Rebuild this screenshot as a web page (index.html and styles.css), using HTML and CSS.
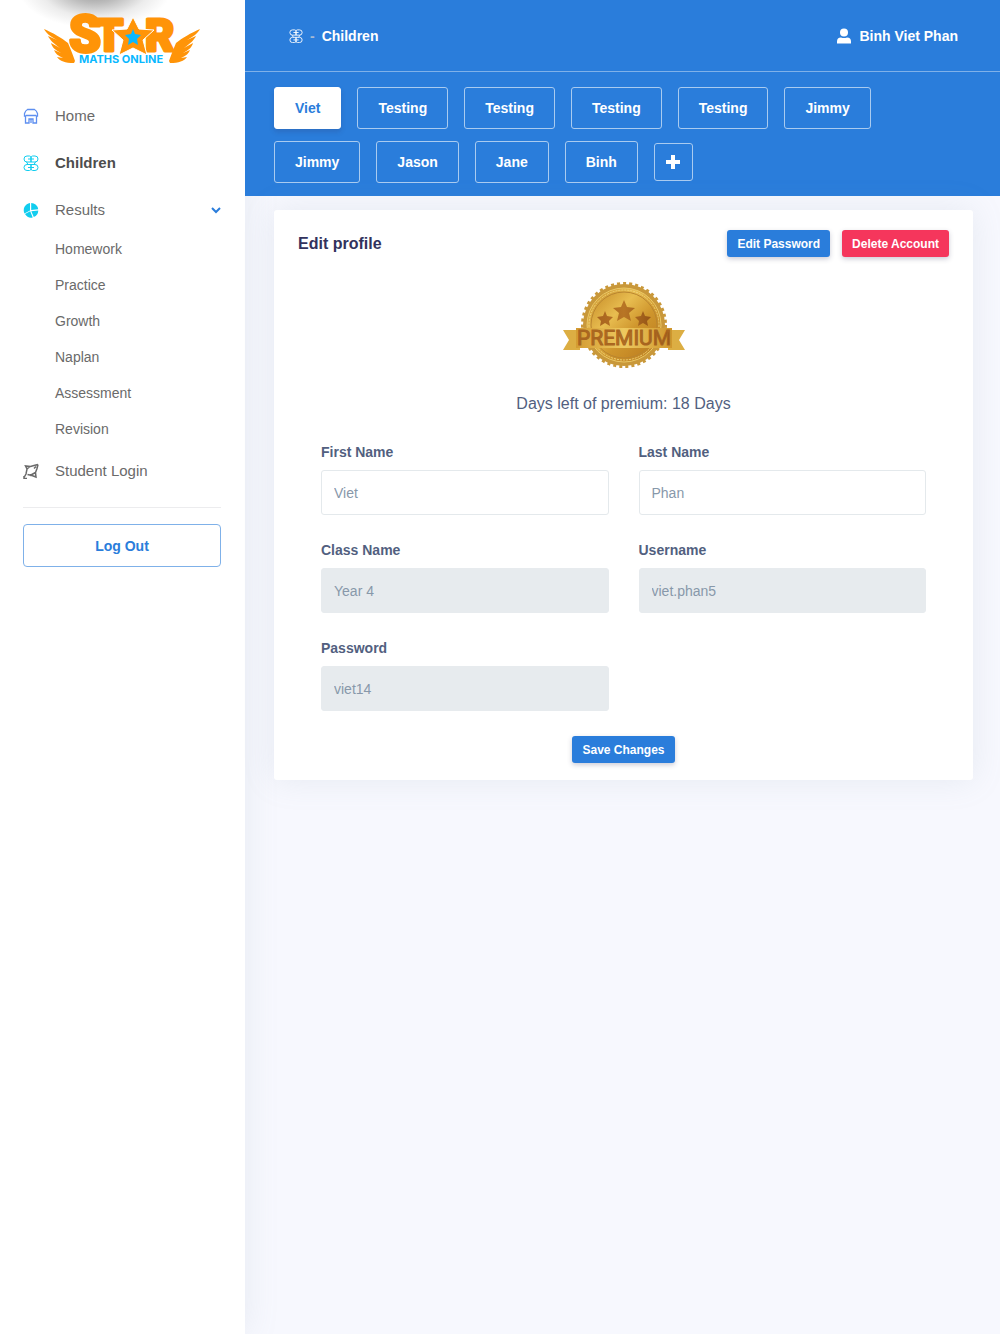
FILE: index.html
```html
<!DOCTYPE html>
<html lang="en">
<head>
<meta charset="utf-8">
<meta name="viewport" content="width=device-width, initial-scale=1">
<title>Children - Star Maths Online</title>
<link rel="stylesheet" href="styles.css">
</head>
<body>
<svg class="defs" aria-hidden="true">
  <symbol id="butterfly" viewBox="0 0 16 16">
    <path d="M4 1h2.500Q8 1 8 3v4H4Q1 7 1 4t3-3zM12 1H9.500Q8 1 8 3v4h4q3 0 3-3t-3-3zM4 9.500h4v4q0 2-1.500 2H4q-3 0-3-3t3-3zM12 9.500H8v4q0 2 1.500 2H12q3 0 3-3t-3-3zM5 4h6M5 12.500h6M3.500 7l1.500 2.500M12.500 7L11 9.500" fill="none" stroke="currentColor" stroke-width="1"/>
  </symbol>
</svg>
<div class="app">
  <aside class="sidebar">
    <a class="logo" href="#" aria-label="Star Maths Online">
      <svg viewBox="0 0 158 56" width="158" height="56">
        <g fill="#ff9408">
          <path d="M1 18C10 22 19 27 25 32c3 7 5 12 7 18l-1 2C22 52 17 50 14 46l6 1c-5-2-8-5-9-8l7 3c-6-3-9-6-10-10l9 5C10 32 7 29 5 25l9 4C8 26 3 22 1 18z"/>
          <path d="M157 18c-9 4-18 9-24 14-3 7-5 12-7 18l1 2c9 0 14-2 17-6l-6 1c5-2 8-5 9-8l-7 3c6-3 9-6 10-10l-9 5c7-5 10-8 12-12l-9 4c6-3 11-7 13-11z"/>
          <g class="logo-word" stroke="#ff9408" stroke-width="3" stroke-linejoin="round">
            <text x="26" y="41" font-size="51">S</text>
            <text x="52" y="40" font-size="45">T</text>
            <text x="102" y="40" font-size="45">R</text>
          </g>
          <path d="M90 6l6 12 15 1-11 10 4 15-14-7-14 7 4-15-11-10 15-1z" stroke="#fff" stroke-width="1"/>
        </g>
        <path d="M90 18l2 5 6 1-4 4 1 6-5-3-5 3 1-6-4-4 6-1z" fill="#09b8ff"/>
        <text class="logo-tag" x="36" y="52" font-size="11">MATHS ONLINE</text>
      </svg>
    </a>
    <nav>
      <ul class="nav">
        <li><a class="nav-link" href="#">
          <svg class="icon home" viewBox="0 0 16 16"><path d="M4.500 1.500h7q2 1 3 4v2.500h-1v7h-3.500v-4H6v4H2.500V8h-1V5.500q1-3 3-4zM3 7.500h10M8 11v4" fill="none" stroke="currentColor" stroke-width="1.300"/></svg>
          Home</a></li>
        <li><a class="nav-link active" href="#"><svg class="icon cyan"><use href="#butterfly"/></svg>Children</a></li>
        <li>
          <a class="nav-link" href="#">
            <svg class="icon cyan" viewBox="0 0 16 16"><path d="M7 1v7.500l-5.500 3A7.300 7.300 0 0 1 7 1zM8.200 1a7.200 7.200 0 0 1 7 6.300l-7 .8zM8.300 9.200l7-.7a7.300 7.300 0 0 1-4.500 6.500zM7.200 9.200l2.500 6.300A7.300 7.300 0 0 1 2 12z" fill="currentColor"/></svg>
            Results
            <svg class="chevron" viewBox="0 0 10 8"><path d="M1 2l4 4 4-4" fill="none" stroke="currentColor" stroke-width="2"/></svg>
          </a>
          <ul class="subnav">
            <li><a href="#">Homework</a></li>
            <li><a href="#">Practice</a></li>
            <li><a href="#">Growth</a></li>
            <li><a href="#">Naplan</a></li>
            <li><a href="#">Assessment</a></li>
            <li><a href="#">Revision</a></li>
          </ul>
        </li>
        <li><a class="nav-link" href="#">
          <svg class="icon" viewBox="0 0 16 16"><path d="M15 1.500L11 2.500 7.500 3.500 2.500 3l1.500 3-1 5-2 3.500M15 1.500l-1 4-1.500 4 .500 4.500-4-1.500-4.500-1M4 6l3-2.500M7 12.500l5.500-3M11 5.500l2-2M1 13v2.500h3" fill="none" stroke="currentColor" stroke-width="1.500"/></svg>
          Student Login</a></li>
      </ul>
    </nav>
    <hr>
    <button class="logout" type="button">Log Out</button>
  </aside>

  <main>
    <header>
      <div class="topbar">
        <div class="crumbs"><svg class="crumb-icon"><use href="#butterfly"/></svg><span class="dash">-</span><span>Children</span></div>
        <a class="user" href="#"><svg viewBox="0 0 14 16" width="14" height="16"><circle cx="7" cy="4.500" r="4" fill="currentColor"/><path d="M0 15.500v-2q0-4 4-4 3 1.200 6 0 4 0 4 4v2z" fill="currentColor"/></svg>Binh Viet Phan</a>
      </div>
      <div class="tabs">
        <button class="tab selected" type="button">Viet</button>
        <button class="tab" type="button">Testing</button>
        <button class="tab" type="button">Testing</button>
        <button class="tab" type="button">Testing</button>
        <button class="tab" type="button">Testing</button>
        <button class="tab" type="button">Jimmy</button>
        <button class="tab" type="button">Jimmy</button>
        <button class="tab" type="button">Jason</button>
        <button class="tab" type="button">Jane</button>
        <button class="tab" type="button">Binh</button>
        <button class="tab add" type="button" aria-label="Add child"><svg viewBox="0 0 14 14" width="14" height="14"><path d="M7 0v14M0 7h14" stroke="currentColor" stroke-width="4"/></svg></button>
      </div>
    </header>

    <section class="card">
      <div class="card-head">
        <h1>Edit profile</h1>
        <div class="actions">
          <button class="btn" type="button">Edit Password</button>
          <button class="btn danger" type="button">Delete Account</button>
        </div>
      </div>
      <div class="premium">
        <svg viewBox="0 0 122 88" width="122" height="88">
          <defs>
            <linearGradient id="gold" x1="0" y1="0" x2="1" y2="1"><stop offset="0" stop-color="#c58a26"/><stop offset=".35" stop-color="#e8bd50"/><stop offset=".6" stop-color="#cf962d"/><stop offset="1" stop-color="#b9791d"/></linearGradient>
            <linearGradient id="ribbon"><stop offset="0" stop-color="#d39b32"/><stop offset=".5" stop-color="#eec95f"/><stop offset="1" stop-color="#cf962d"/></linearGradient>
            <linearGradient id="bronze"><stop offset="0" stop-color="#a8641f"/><stop offset=".5" stop-color="#b87525"/><stop offset="1" stop-color="#955417"/></linearGradient>
          </defs>
          <circle cx="61" cy="44" r="41" fill="#c9983a"/>
          <circle cx="61" cy="44" r="41" fill="none" stroke="#c9983a" stroke-width="4" stroke-dasharray="3 3"/>
          <circle cx="61" cy="44" r="37" fill="url(#gold)" stroke="#eac866" stroke-width="1"/>
          <circle cx="61" cy="44" r="33" fill="url(#gold)" stroke="#b98530" stroke-width="1"/>
          <circle cx="61" cy="44" r="35" fill="none" stroke="#f0d47a" stroke-width="1" stroke-dasharray="2 1"/>
          <path d="M0 49h17v20H0l6-10zM122 49h-17v20h17l-6-10z" fill="#dcae43"/>
          <path d="M13 47h96v20H13z" fill="url(#ribbon)"/>
          <path d="M61 19l3 7 8 1-6 5 2 8-7-4-7 4 2-8-6-5 8-1zM42 30l2 5 6 1-4 4 1 5-5-3-5 3 1-5-4-4 6-1zM80 30l2 5 6 1-4 4 1 5-5-3-5 3 1-5-4-4 6-1z" fill="url(#bronze)"/>
          <text x="61" y="64" text-anchor="middle" font-size="21" fill="url(#bronze)" stroke="#a8651f" stroke-width="1">PREMIUM</text>
        </svg>
        <p>Days left of premium: 18 Days</p>
      </div>
      <form>
        <div class="fields">
          <div class="field"><label for="first">First Name</label><input id="first" type="text" value="Viet"></div>
          <div class="field"><label for="last">Last Name</label><input id="last" type="text" value="Phan"></div>
          <div class="field"><label for="class">Class Name</label><input id="class" type="text" value="Year 4" disabled></div>
          <div class="field"><label for="username">Username</label><input id="username" type="text" value="viet.phan5" disabled></div>
          <div class="field"><label for="password">Password</label><input id="password" type="text" value="viet14" disabled></div>
        </div>
        <button class="btn save" type="button">Save Changes</button>
      </form>
    </section>
  </main>
</div>
</body>
</html>
```
FILE: styles.css
```css
* { box-sizing: border-box; }
body {
  margin: 0;
  background: #f7f8fe;
  color: #525f7f;
  font: 14px/20px "Liberation Sans", Arial, sans-serif;
}
button, input { font: inherit; }
button { cursor: pointer; }
a { color: inherit; text-decoration: none; }
ul { list-style: none; margin: 0; padding: 0; }
.defs { position: absolute; width: 0; height: 0; }

.app { display: flex; min-height: 100vh; }

/* Sidebar */
.sidebar {
  flex: 0 0 245px;
  padding: 11px 24px 24px 23px;
  background: #fff radial-gradient(ellipse 76px 38px at 95px -10px, #949494 0, #bcbcbc 35%, #ececec 70%, #fff 100%) no-repeat;
  box-shadow: 0 0 32px rgba(136, 152, 170, .15);
}
.logo { display: block; margin: 0 0 27px 20px; height: 56px; }
.logo svg { overflow: visible; }
.logo-word { font-family: Roboto, Arial, sans-serif; font-weight: 900; }
.logo-tag { font-family: Inter, Arial, sans-serif; font-weight: 700; fill: #09b8ff; stroke: #fff; stroke-width: 2px; paint-order: stroke; }
.nav { display: flex; flex-direction: column; gap: 3px; }
.nav-link {
  display: flex;
  align-items: center;
  gap: 16px;
  height: 44px;
  color: #6a6a6a;
  font-size: 15px;
}
.nav-link.active { color: #4d4d4d; font-weight: 700; }
.icon { flex: none; width: 16px; height: 16px; }
.nav-link .home { color: #5e8ff0; }
.nav-link .cyan { color: #11cdef; }
.chevron { width: 10px; height: 8px; margin-left: auto; color: #2a7ddb; }
.subnav { display: flex; flex-direction: column; gap: 2px; padding-left: 32px; }
.subnav a { display: block; line-height: 34px; color: #6a6a6a; }
hr { margin: 14px 0 16px; border: 0; border-top: 1px solid #ececee; }
.logout {
  width: 100%;
  height: 43px;
  border: 1px solid #7fb1e9;
  border-radius: 4px;
  background: #fff;
  color: #2a7ddb;
  font-weight: 700;
}

/* Header */
main { flex: 1; min-width: 0; }
header { background: #2a7ddb; color: #fff; font-weight: 700; }
.topbar {
  display: flex;
  align-items: center;
  justify-content: space-between;
  height: 72px;
  padding: 0 42px 0 44px;
  border-bottom: 1px solid #7fb1e9;
}
.crumbs { display: flex; align-items: center; gap: 7px; }
.crumb-icon { width: 14px; height: 14px; }
.dash { color: #a5b9d4; }
.user { display: flex; align-items: center; gap: 8px; }
.tabs { display: flex; flex-wrap: wrap; align-items: center; gap: 12px 16px; padding: 15px 40px 13px 29px; }
.tab {
  height: 42px;
  padding: 0 20px;
  border: 1px solid #a9cbf0;
  border-radius: 3px;
  background: transparent;
  color: #fff;
  font-weight: 700;
}
.tab.selected { border-color: #fff; background: #fff; color: #2a7ddb; box-shadow: 0 3px 5px rgba(50, 50, 93, .2); }
.tab.add { display: grid; place-items: center; width: 39px; height: 38px; padding: 0; }

/* Profile card */
.card {
  margin: 14px 27px 30px 29px;
  padding: 20px 24px 17px;
  border-radius: 3px;
  background: #fff;
  box-shadow: 0 0 32px rgba(136, 152, 170, .15);
}
.card-head { display: flex; align-items: center; justify-content: space-between; }
h1 { margin: 0; color: #32325d; font-size: 16px; line-height: 24px; }
.actions { display: flex; gap: 12px; }
.btn {
  height: 27px;
  padding: 0 10px;
  border: 0;
  border-radius: 3px;
  background: #2a7ddb;
  color: #fff;
  font-size: 12px;
  font-weight: 700;
  box-shadow: 0 2px 5px rgba(50, 50, 93, .25);
}
.btn.danger { background: #f5365c; }
.premium { display: flex; flex-direction: column; align-items: center; padding-top: 24px; font-size: 16px; }
.premium text { font-family: Roboto, Arial, sans-serif; }
.premium p { margin: 25px 0 28px; }
form { display: flex; flex-direction: column; align-items: center; padding: 0 23px; }
.fields { display: grid; grid-template-columns: 1fr 1fr; gap: 25px 30px; width: 100%; }
.field { display: flex; flex-direction: column; gap: 8px; min-width: 0; }
.field label { font-weight: 700; }
.field input {
  width: 100%;
  height: 45px;
  padding: 0 12px;
  border: 1px solid #e4e9ec;
  border-radius: 3px;
  background: #fff;
  color: #8898aa;
}
.field input:disabled { border-color: #e7ebee; background: #e7ebee; }
.save { margin-top: 25px; }
```
